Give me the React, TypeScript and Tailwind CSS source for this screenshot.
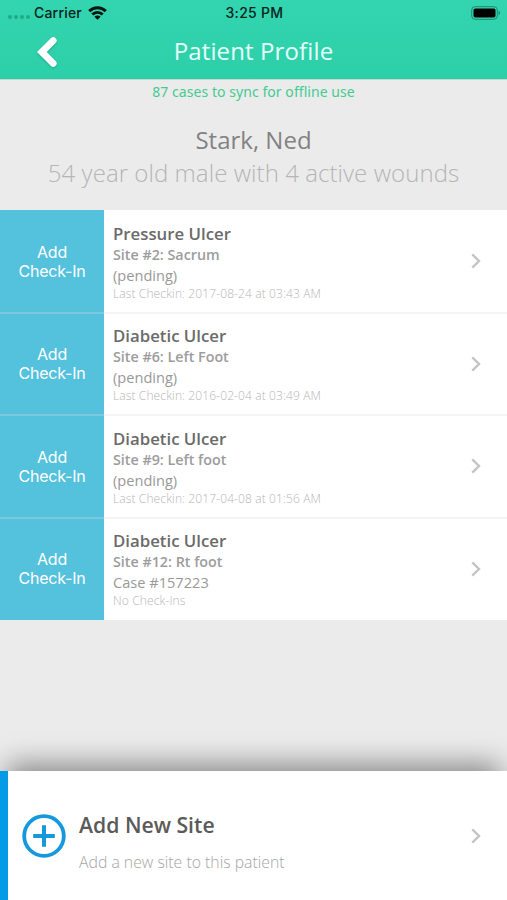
type Wound = {
  id: number;
  type: string;
  site: string;
  status: string;
  lastCheckin: string;
};

const wounds: Wound[] = [
  { id: 1, type: 'Pressure Ulcer', site: 'Site #2: Sacrum', status: '(pending)', lastCheckin: 'Last Checkin: 2017-08-24 at 03:43 AM' },
  { id: 2, type: 'Diabetic Ulcer', site: 'Site #6: Left Foot', status: '(pending)', lastCheckin: 'Last Checkin: 2016-02-04 at 03:49 AM' },
  { id: 3, type: 'Diabetic Ulcer', site: 'Site #9: Left foot', status: '(pending)', lastCheckin: 'Last Checkin: 2017-04-08 at 01:56 AM' },
  { id: 4, type: 'Diabetic Ulcer', site: 'Site #12: Rt foot', status: 'Case #157223', lastCheckin: 'No Check-Ins' },
];

function Chevron() {
  return (
    <svg className="w-[10px] h-4 shrink-0" viewBox="0 0 10 16" fill="none" stroke="#c4c4c6" strokeWidth="2.4">
      <path d="M1.3 1.4 8 8l-6.7 6.6" />
    </svg>
  );
}

function StatusBar() {
  return (
    <div className="grid grid-cols-3 items-center h-[25px] pl-2 pr-[6px] font-['Inter',sans-serif] text-[14px] font-medium text-[#06231b]">
      <div className="flex items-center">
        <div className="flex gap-[2px] pt-2 mr-[4px]">
          <i className="size-[4px] rounded-full bg-[#22a988]" />
          <i className="size-[4px] rounded-full bg-[#22a988]" />
          <i className="size-[4px] rounded-full bg-[#22a988]" />
          <i className="size-[4px] rounded-full bg-[#22a988]" />
        </div>
        <span className="tracking-[0.2px]">Carrier</span>
        <svg className="w-[19px] h-[14px] ml-[6px]" viewBox="0 0 19 14" fill="none" stroke="#04140f" strokeWidth="2.9">
          <path d="M1.2 5.1a11.8 11.8 0 0 1 16.6 0" />
          <path d="M4.3 8.5a7.4 7.4 0 0 1 10.4 0" />
          <path d="M9.5 13.8 6.4 10.8a4.4 4.4 0 0 1 6.2 0z" fill="#04140f" stroke="none" />
        </svg>
      </div>
      <span className="text-center tracking-[0.3px]">3:25 PM</span>
      <svg className="w-[30px] h-[14px] justify-self-end" viewBox="0 0 30 14">
        <rect x="0.7" y="0.7" width="25.6" height="12.6" rx="3.4" fill="none" stroke="#1b8a70" />
        <rect x="2.5" y="2.5" width="22" height="9" rx="1.8" fill="#000" />
        <path d="M27.6 4.8c1.8.6 1.8 3.8 0 4.4z" fill="#1b8a70" />
      </svg>
    </div>
  );
}

function WoundRow({ wound, last }: { wound: Wound; last: boolean }) {
  return (
    <li className="relative flex flex-1 bg-white">
      <button className="w-[104px] shrink-0 pt-px bg-[#54c1dd] text-white font-['Inter',sans-serif] text-[16px] leading-[19px] tracking-[-0.2px]">
        Add<br />Check-In
      </button>
      <div className="flex flex-1 items-center justify-between pl-[9px] pr-[26px]">
        <div className="pt-[2px] whitespace-nowrap">
          <h2 className="text-[16.8px] leading-[22px] font-semibold text-[#6a6a6a]">{wound.type}</h2>
          <p className="text-[14.3px] leading-5 font-semibold text-[#9c9c9c]">{wound.site}</p>
          <p className="text-[14.6px] leading-5 text-[#999]">{wound.status}</p>
          <p className="pt-px text-[12px] leading-4 font-light tracking-[0.12px] text-[#b5b5b5]">{wound.lastCheckin}</p>
        </div>
        <Chevron />
      </div>
      {!last && <div className="absolute inset-x-0 -bottom-px z-10 h-[2px] bg-[#dcdcdc]/30" />}
    </li>
  );
}

export default function App() {
  return (
    <div className="flex flex-col w-[507px] h-[900px] overflow-hidden bg-[#ebebeb] font-['Open_Sans',sans-serif]">
      <header className="h-20 shrink-0 bg-linear-to-b from-[#33d5b0] to-[#2dcfa9] border-b border-[#bfddd5]">
        <StatusBar />
        <div className="grid grid-cols-[96px_1fr_96px] items-center h-[51px]">
          <button className="justify-self-center pt-[3px] pr-[3px] drop-shadow-[0_1px_1px_rgba(0,0,0,0.2)]">
            <svg className="w-[22px] h-[32px]" viewBox="0 0 22 32" fill="none" stroke="#fff" strokeWidth="6.8" strokeLinecap="round">
              <path d="M17.2 4.6 5.8 16l11.4 11.4" />
            </svg>
          </button>
          <h1 className="text-center text-[24px] leading-8 tracking-[0.12px] text-[#e5fff9]">Patient Profile</h1>
        </div>
      </header>

      <p className="h-6 shrink-0 text-center font-['Noto_Sans',sans-serif] text-[14px] leading-6 tracking-[0.06px] text-[#43cb91]">
        87 cases to sync for offline use
      </p>

      <section className="h-[106px] shrink-0 pt-[19px] text-center">
        <h2 className="text-[24px] leading-[33px] text-[#828282]">Stark, Ned</h2>
        <p className="text-[24px] leading-[33px] font-light tracking-[0.06px] text-[#b5b5b5]">54 year old male with 4 active wounds</p>
      </section>

      <ul className="flex flex-col h-[410px] shrink-0">
        {wounds.map((wound, i) => (
          <WoundRow key={wound.id} wound={wound} last={i === wounds.length - 1} />
        ))}
      </ul>

      <footer className="flex items-center mt-auto h-[129px] shrink-0 bg-white border-l-8 border-[#069be6] pl-[14px] pr-[26px] shadow-[0_-14px_26px_-7px_rgba(0,0,0,0.42)]">
        <svg className="size-[44px] shrink-0" viewBox="0 0 44 44" fill="none" stroke="#1598dc">
          <circle cx="22" cy="22" r="19.8" strokeWidth="3.8" />
          <path d="M22 11.2v21.6M11.2 22h21.6" strokeWidth="4" />
        </svg>
        <div className="flex-1 pt-4 pl-[13px]">
          <h2 className="text-[21.2px] leading-8 font-semibold text-[#5a5a5a]">Add New Site</h2>
          <p className="mt-[5px] text-[15.8px] leading-8 font-light text-[#a5a5a5]">Add a new site to this patient</p>
        </div>
        <Chevron />
      </footer>
    </div>
  );
}
